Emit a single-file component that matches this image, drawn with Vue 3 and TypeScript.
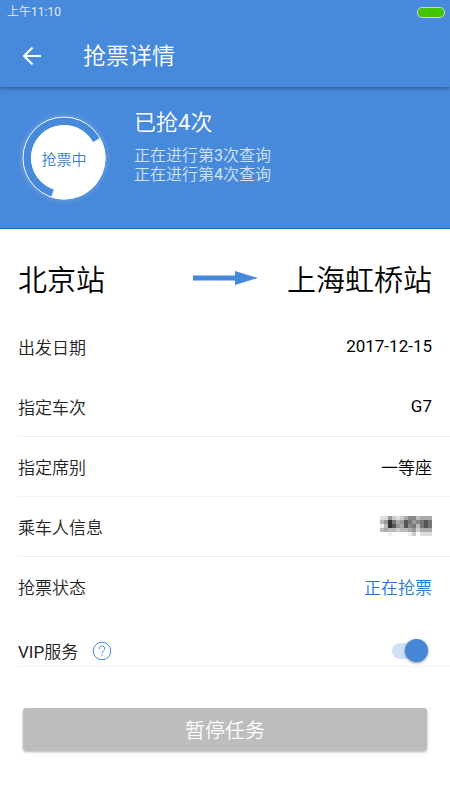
<script setup lang="ts">
import { computed, ref } from 'vue'

interface Detail {
  label: string
  value: string
  divider: boolean
  kind?: 'masked' | 'active' | 'latin'
}

const details: Detail[] = [
  { label: '出发日期', value: '2017-12-15', divider: false, kind: 'latin' },
  { label: '指定车次', value: 'G7', divider: true, kind: 'latin' },
  { label: '指定席别', value: '一等座', divider: true },
  { label: '乘车人信息', value: '', divider: true, kind: 'masked' },
  { label: '抢票状态', value: '正在抢票', divider: false, kind: 'active' },
]

const queries: number[] = [3, 4]
const vip = ref<boolean>(true)

// Mosaic brightness levels hiding the passenger name, one hex digit per cell (f = white).
const mosaicRows: string[] = [
  'dd9cdca88baaa',
  'b937a95798757',
  'eb359a587b757',
  'babbcbba9caaa',
  'ffeffffecfddd',
]
const mosaic = computed(() =>
  mosaicRows.flatMap((row, y) =>
    [...row].map((c, x) => ({ x: x * 4, y: y * 4, fill: `#${c}${c}${c}` })),
  ),
)
</script>

<template>
  <div class="page">
    <header class="top">
      <div class="status">
        <span>上午<span class="latin">11:10</span></span>
        <span class="battery"></span>
      </div>
      <div class="bar">
        <button class="back" type="button" aria-label="返回">
          <svg width="20" height="20" viewBox="0 0 20 20">
            <path d="M19 10H2M10.500 1.500L2 10l8.500 8.500" fill="none" stroke="#fff" stroke-width="2" />
          </svg>
        </button>
        <h1>抢票详情</h1>
      </div>
    </header>

    <section class="hero">
      <div class="ring">
        <svg width="84" height="84" viewBox="0 0 84 84" aria-hidden="true">
          <circle cx="42" cy="42" r="41" fill="none" stroke="#fff" stroke-width="1" />
          <path d="M78.300 21.900A41.500 41.500 0 0 1 29.200 81.500L31.800 73.400A33 33 0 1 1 70.900 26Z" fill="#fff" />
          <circle cx="42" cy="42" r="33" fill="#fff" />
        </svg>
        <span class="ring-text">抢票中</span>
      </div>
      <div class="progress">
        <h2>已抢<span class="latin">4</span>次</h2>
        <p v-for="n in queries" :key="n">正在进行第<span class="latin">{{ n }}</span>次查询</p>
      </div>
    </section>

    <main>
      <div class="route">
        <span>北京站</span>
        <svg width="66" height="16" viewBox="0 0 66 16" aria-hidden="true">
          <path d="M1 5.500H43V1L66 8L43 15V10.500H1Z" fill="#4789da" />
        </svg>
        <span class="destination">上海虹桥站</span>
      </div>

      <dl class="details">
        <div v-for="d in details" :key="d.label" class="row" :class="{ divided: d.divider }">
          <dt>{{ d.label }}</dt>
          <dd :class="d.kind">
            <svg v-if="d.kind === 'masked'" class="mosaic" width="52" height="20" viewBox="0 0 52 20" shape-rendering="crispEdges">
              <rect v-for="(m, i) in mosaic" :key="i" :x="m.x" :y="m.y" width="4" height="4" :fill="m.fill" />
            </svg>
            <template v-else>{{ d.value }}</template>
          </dd>
        </div>
      </dl>

      <div class="row vip divided">
        <div class="vip-label">
          <label for="vip"><span class="latin">VIP</span>服务</label>
          <button class="help" type="button" aria-label="帮助">
            <svg width="20" height="20" viewBox="0 0 20 20" fill="none" stroke="#4789da">
              <circle cx="10" cy="10" r="8.800" />
              <path d="M7.200 8C7.200 4.200 12.800 4.200 12.800 7.600C12.800 9.800 10 9.800 10 12.200M10 13.800V15.200" />
            </svg>
          </button>
        </div>
        <input id="vip" v-model="vip" class="switch" type="checkbox" role="switch" />
      </div>

      <button class="pause" type="button">暂停任务</button>
    </main>
  </div>
</template>

<style>
body {
  margin: 0;
  background: #fff;
}
</style>

<style scoped>
.page {
  min-height: 100vh;
  font-family: Roboto, "Noto Sans CJK SC", sans-serif;
  font-size: 17px;
  font-weight: 350;
  color: #000;
}

button {
  padding: 0;
  border: 0;
  background: none;
  font: inherit;
  cursor: pointer;
}

h1,
h2,
p,
dl,
dd {
  margin: 0;
  font-weight: 350;
}

.top {
  position: relative;
  background: #4789da;
  color: #fff;
  box-shadow: 0 1px 4px rgba(0, 0, 0, 0.4);
}

.status {
  display: flex;
  justify-content: space-between;
  align-items: center;
  height: 24px;
  padding: 0 5px 0 7px;
  font-size: 12px;
  line-height: 20px;
  color: #e4eefa;
}

.battery {
  box-sizing: border-box;
  width: 28px;
  height: 11px;
  border: 1px solid #c3d5f2;
  border-radius: 5px;
  background: #43c400;
}

.bar {
  display: flex;
  align-items: center;
  gap: 41px;
  height: 63px;
  padding: 0 22px;
}

.back,
.help {
  display: flex;
}

h1 {
  padding-top: 2px;
  font-size: 23px;
  line-height: 32px;
}

.hero {
  display: flex;
  gap: 28px;
  padding: 22px;
  height: 97px;
  border-bottom: 1px solid #1079d8;
  background: #4789da;
  color: #fff;
}

.ring {
  display: grid;
  place-items: center;
  align-self: flex-start;
  margin-top: 7px;
  border-radius: 50%;
  box-shadow: 0 0 6px rgba(255, 255, 255, 0.25);
}

.ring > * {
  grid-area: 1 / 1;
}

.ring-text {
  font-size: 15px;
  color: #3c7fd0;
}

h2 {
  margin-bottom: 9px;
  font-size: 22px;
  line-height: 28px;
}

.progress p {
  font-size: 16px;
  line-height: 19px;
  color: #d3e3f7;
}

.route {
  display: grid;
  grid-template-columns: 1fr auto 1fr;
  align-items: center;
  height: 88px;
  padding: 10px 18px 0;
  box-sizing: border-box;
  font-size: 29px;
  white-space: nowrap;
}

.destination {
  justify-self: end;
}

.row {
  display: flex;
  justify-content: space-between;
  align-items: center;
  box-sizing: border-box;
  height: 60px;
  margin-left: 18px;
  padding-right: 18px;
  padding-bottom: 1px;
  border-bottom: 1px solid transparent;
}

.divided {
  border-bottom-color: #f3f3f3;
}

dt,
label {
  color: #222;
}

.latin {
  font-weight: 400;
}

.active {
  color: #2279d4;
}

.mosaic {
  display: block;
}

.vip {
  height: 50px;
  padding: 18px 22px 0 0;
}

.vip-label {
  display: flex;
  align-items: center;
  gap: 14px;
}

.switch {
  appearance: none;
  display: flex;
  align-items: center;
  width: 36px;
  height: 16px;
  margin: 0;
  border-radius: 8px;
  background: #d0d0d0;
  cursor: pointer;
}

.switch::before {
  content: "";
  width: 23px;
  height: 23px;
  border-radius: 50%;
  background: #f5f5f5;
  box-shadow: 0 1px 3px rgba(0, 0, 0, 0.4);
}

.switch:checked {
  justify-content: flex-end;
  background: #d0e0f6;
}

.switch:checked::before {
  background: #4685d8;
}

.pause {
  display: block;
  width: calc(100% - 46px);
  height: 42px;
  margin: 41px auto 40px;
  border-radius: 3px;
  background: #bdbdbd;
  box-shadow: 0 2px 3px rgba(0, 0, 0, 0.3);
  color: #fff;
  font-size: 20px;
}
</style>
